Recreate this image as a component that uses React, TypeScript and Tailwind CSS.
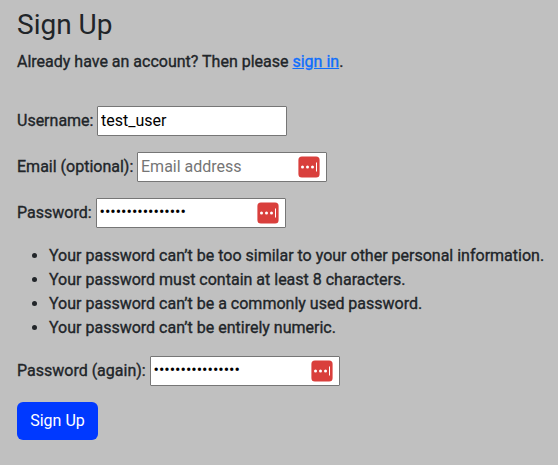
import type { InputHTMLAttributes } from "react";

function ManagerIcon() {
  return (
    <svg className="pointer-events-none absolute top-1 right-[7px] h-[22px] w-[22px]" viewBox="0 0 22 22" aria-hidden="true">
      <rect x="0.4" y="0.4" width="21.2" height="21.2" rx="3.5" fill="#d93f3c" />
      <circle cx="4.5" cy="11" r="1.5" fill="#fff" />
      <circle cx="9.5" cy="11" r="1.5" fill="#fff" />
      <circle cx="14.5" cy="11" r="1.5" fill="#fff" />
      <rect x="18" y="6.5" width="1" height="9" fill="#fff" />
    </svg>
  );
}

type FieldProps = InputHTMLAttributes<HTMLInputElement> & {
  id: string;
  label: string;
  labelWidth: string;
  icon?: boolean;
};

function Field({ id, label, labelWidth, icon, type = "text", ...input }: FieldProps) {
  const inset = type === "password" ? "pl-[2.5px] pb-1" : "pl-[3px] pb-0.5";
  return (
    <div className="flex h-[30px] items-center">
      <label htmlFor={id} className={`${labelWidth} shrink-0 whitespace-nowrap`}>
        {label}
      </label>
      <div className="relative h-[30px] w-[190px]">
        <input
          id={id}
          type={type}
          className={`${inset} block h-[30px] w-[190px] rounded-[1px] border border-[#767676] bg-white pt-0 pr-[3px] text-base font-normal text-black outline-none [-webkit-text-stroke:0] placeholder:text-[#757575]`}
          {...input}
        />
        {icon && <ManagerIcon />}
      </div>
    </div>
  );
}

const rules = [
  "Your password can’t be too similar to your other personal information.",
  "Your password must contain at least 8 characters.",
  "Your password can’t be a commonly used password.",
  "Your password can’t be entirely numeric.",
];

export default function App() {
  return (
    <main className="h-[465px] w-[558px] overflow-hidden bg-[#c0c0c0] pt-2 pl-[17px] font-['Roboto',sans-serif] text-base leading-6 font-normal text-[#212529] [-webkit-text-stroke:0.35px]">
      <h1 className="mb-2 text-[28px] leading-[34px] font-normal [-webkit-text-stroke:0]">Sign Up</h1>
      <p className="mb-8">
        Already have an account? Then please{" "}
        <a href="#signin" className="text-[#0d6efd] underline">sign in</a>.
      </p>
      <form>
        <div className="flex flex-col gap-4">
          <Field id="username" label="Username:" labelWidth="w-20" defaultValue="test_user" />
          <Field id="email" label="Email (optional):" labelWidth="w-[120px]" type="email" placeholder="Email address" icon />
          <Field id="password" label="Password:" labelWidth="w-[79px]" type="password" defaultValue="abcdefghijklmnop" icon />
        </div>
        <ul className="my-4 list-disc pl-8">
          {rules.map((rule) => (
            <li key={rule} className="whitespace-nowrap">{rule}</li>
          ))}
        </ul>
        <Field id="again" label="Password (again):" labelWidth="w-[133px]" type="password" defaultValue="abcdefghijklmnop" icon />
        <button type="button" className="mt-4 h-[38px] w-[81px] rounded-md bg-[#0039ff] text-base font-normal text-white [-webkit-text-stroke:0]">
          Sign Up
        </button>
      </form>
    </main>
  );
}
